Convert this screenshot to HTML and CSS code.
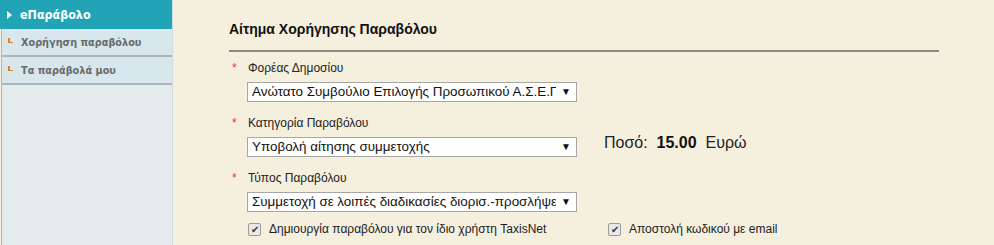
FILE: index.html
```html
<!DOCTYPE html>
<html lang="el">
<head>
    <meta charset="UTF-8">
    <title>eΠαράβολο</title>
    <link rel="stylesheet" href="styles.css">
</head>
<body>
    <div class="page">
        <div class="sidebar">
            <div class="menu-head"><span class="arrow"></span>eΠαράβολο</div>
            <div class="menu-item"><span class="mark"></span>Χορήγηση παραβόλου</div>
            <div class="menu-item"><span class="mark"></span>Τα παράβολά μου</div>
        </div>

        <div class="main">
            <h2 class="title">Αίτημα Χορήγησης Παραβόλου</h2>

            <div class="field">
                <label><span class="req">*</span>Φορέας Δημοσίου</label>
                <div class="row">
                    <div class="select"><span class="value">Ανώτατο Συμβούλιο Επιλογής Προσωπικού Α.Σ.Ε.Π</span></div>
                </div>
            </div>

            <div class="field">
                <label><span class="req">*</span>Κατηγορία Παραβόλου</label>
                <div class="row">
                    <div class="select"><span class="value">Υποβολή αίτησης συμμετοχής</span></div>
                    <div class="amount">Ποσό:&nbsp; <b>15.00</b>&nbsp; Ευρώ</div>
                </div>
            </div>

            <div class="field">
                <label><span class="req">*</span>Τύπος Παραβόλου</label>
                <div class="row">
                    <div class="select"><span class="value">Συμμετοχή σε λοιπές διαδικασίες διορισ.-προσλήψεων</span></div>
                </div>
            </div>

            <div class="checks">
                <div class="check check-first"><span class="box">✔</span>Δημιουργία παραβόλου για τον ίδιο χρήστη TaxisNet</div>
                <div class="check"><span class="box">✔</span>Αποστολή κωδικού με email</div>
            </div>
        </div>
    </div>
</body>
</html>
```

FILE: styles.css
```css
body {
    margin: 0;
    font-family: "Liberation Sans", Arial, sans-serif;
    background-color: #f5efde;
    color: #222;
}
.page {
    display: flex;
    height: 245px;
    overflow: hidden;
}
.sidebar {
    width: 170px;
    margin-left: 1px;
    border-left: 1px solid #b4b8ba;
    border-right: 1px solid #cddbe2;
    background-color: #e4ebed;
    font-family: "DejaVu Sans Condensed", "DejaVu Sans", Verdana, sans-serif;
    font-weight: bold;
    flex-shrink: 0;
}
.menu-head {
    height: 29px;
    margin-left: -2px;
    padding-left: 7px;
    background-color: #22a4b6;
    color: white;
    font-size: 12.4px;
    display: flex;
    align-items: center;
}
.arrow {
    width: 0;
    height: 0;
    border-top: 4px solid transparent;
    border-bottom: 4px solid transparent;
    border-left: 5px solid white;
    margin-right: 8px;
}
.menu-item {
    height: 26px;
    padding-left: 6px;
    background-color: #d8e6ee;
    border-bottom: 2px solid #aeb3b5;
    color: #6a6a6a;
    font-size: 10.8px;
    display: flex;
    align-items: center;
}
.mark {
    width: 3px;
    height: 4px;
    border-left: 2px solid #d9822b;
    border-bottom: 1px solid #d9822b;
    margin-right: 8px;
    margin-top: -3px;
}
.main {
    padding-left: 56px;
    width: 710px;
}
.title {
    margin: 22px 0 0;
    padding-bottom: 13px;
    border-bottom: 2px solid #8a8a80;
    font-size: 14px;
    line-height: 15px;
    color: #111;
}
.field {
    margin-top: 9px;
}
.field + .field {
    margin-top: 14px;
}
label {
    display: block;
    font-size: 12px;
    line-height: 15px;
    color: #222;
}
.req {
    display: inline-block;
    width: 16px;
    padding-left: 3px;
    color: #d63a3a;
}
.row {
    display: flex;
    align-items: center;
    margin-top: 6px;
    margin-left: 18px;
}
.select {
    display: flex;
    align-items: center;
    width: 328px;
    height: 18px;
    border: 1px solid #a6a6a6;
    background-color: white;
    font-size: 13.4px;
    line-height: 18px;
    color: #111;
}
.value {
    flex: 1;
    padding-left: 4px;
    white-space: nowrap;
    overflow: hidden;
}
.select::after {
    content: "▼";
    width: 20px;
    font-size: 10px;
    text-align: center;
}
.amount {
    margin-left: 27px;
    margin-top: -9px;
    font-size: 16px;
    color: #222;
}
.amount b {
    color: #111;
}
.checks {
    display: flex;
    margin-top: 10px;
    margin-left: 19px;
    font-size: 12px;
}
.check {
    display: flex;
    align-items: center;
}
.check-first {
    width: 360px;
}
.box {
    width: 11px;
    height: 11px;
    margin-right: 8px;
    border: 1px solid #9a9a9a;
    border-radius: 2px;
    background-color: #e8e8e8;
    color: #333;
    font-size: 10px;
    line-height: 11px;
    text-align: center;
}
```
